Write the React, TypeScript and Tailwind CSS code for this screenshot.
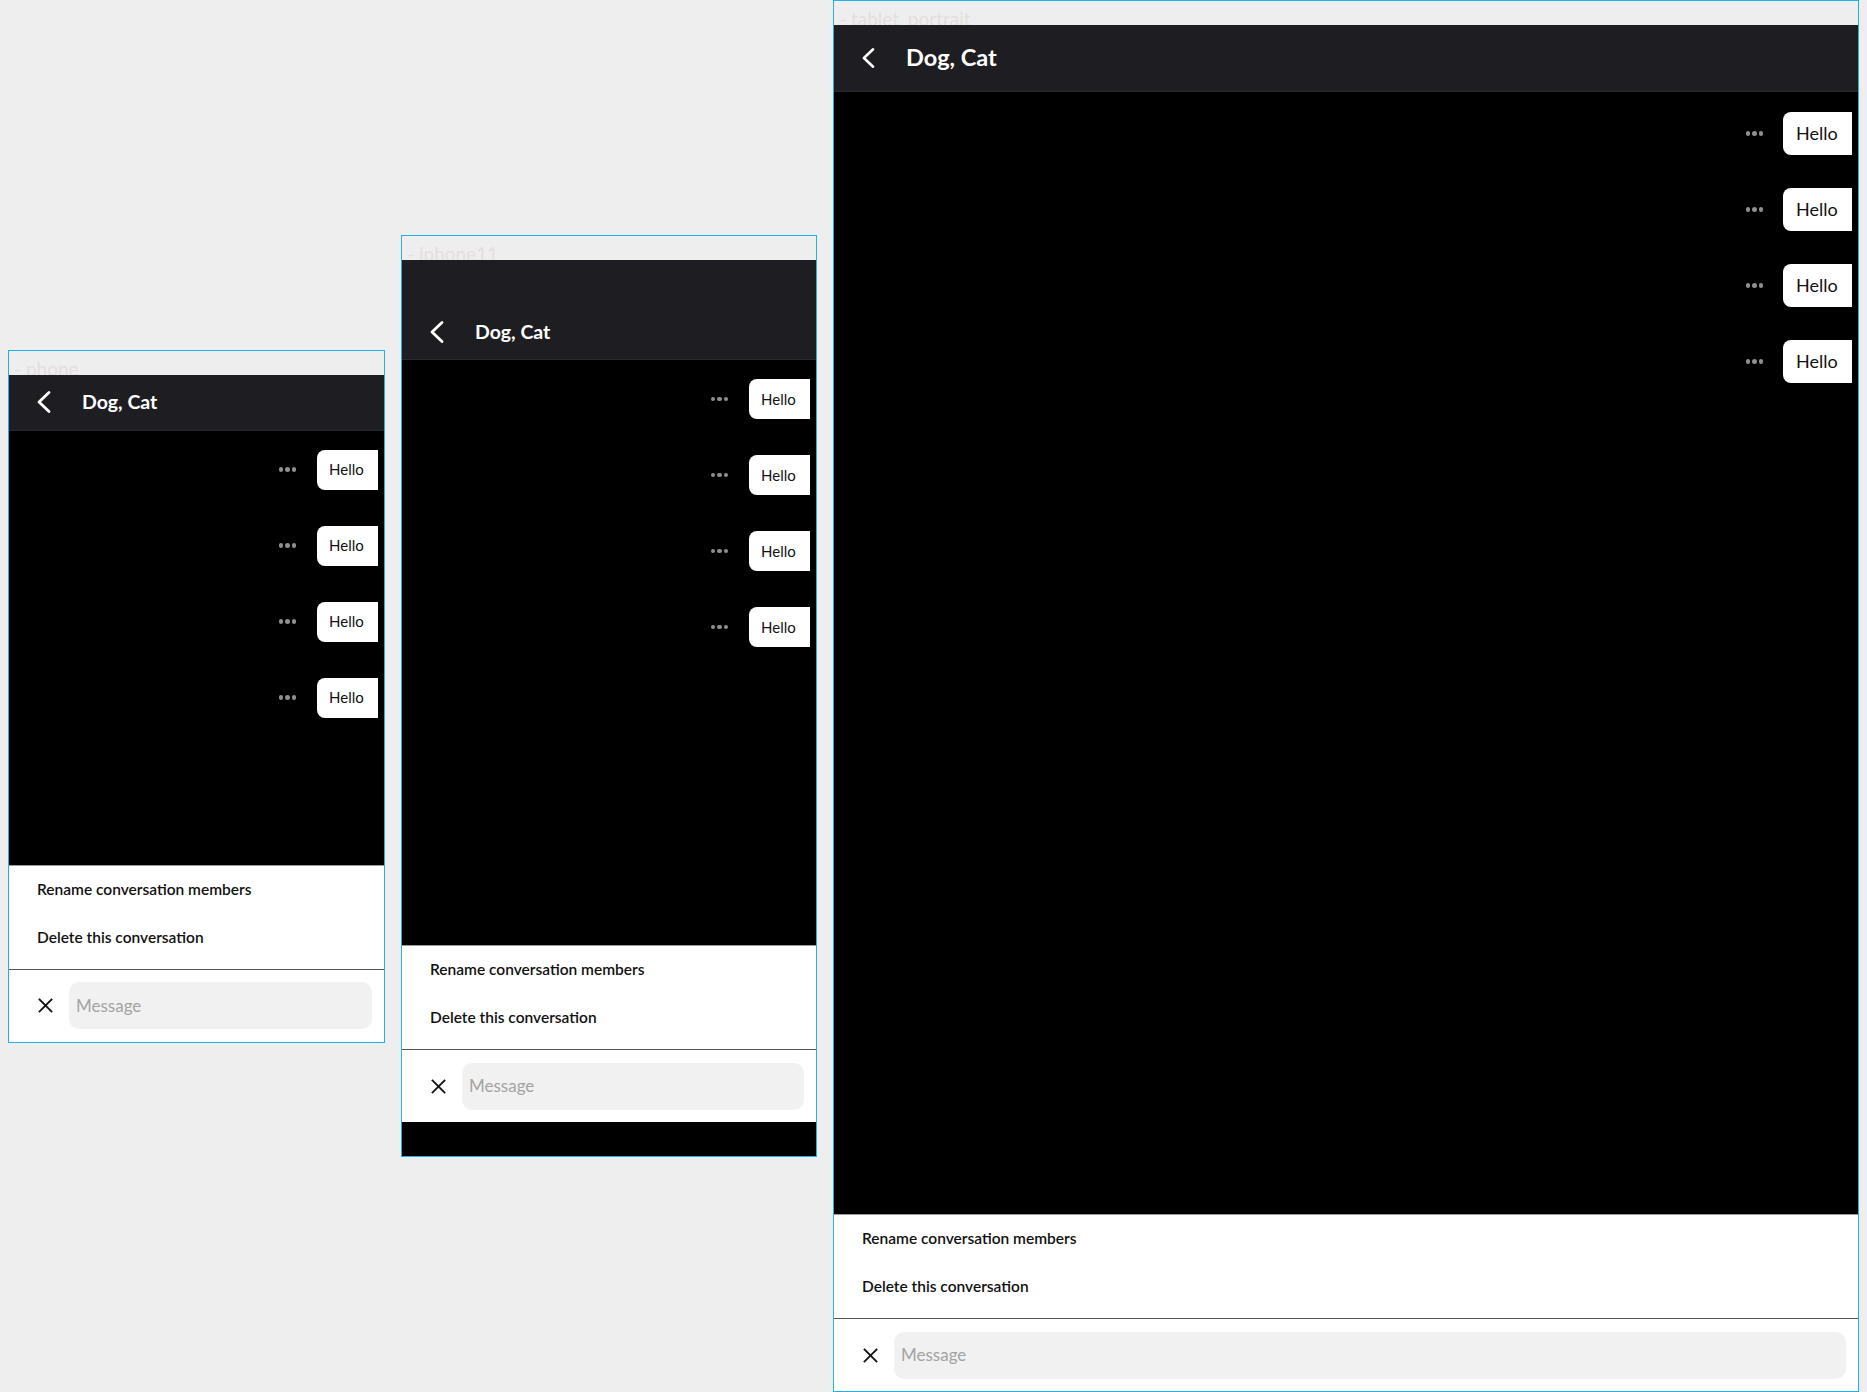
import React from 'react';

type Kind = 'phone' | 'iphone11' | 'tablet_portrait';

const Chevron: React.FC<{ big?: boolean }> = ({ big }) => (
  <svg
    width={big ? 15 : 16}
    height={big ? 22 : 24}
    viewBox="0 0 16 24"
    fill="none"
    stroke="white"
    strokeWidth={2.8}
    strokeLinecap="round"
    strokeLinejoin="round"
  >
    <polyline points="13,2.5 3,12 13,21.5" />
  </svg>
);

const CloseIcon: React.FC = () => (
  <svg width="15" height="15" viewBox="0 0 15 15" stroke="#111" strokeWidth={1.8} strokeLinecap="square">
    <line x1="1.5" y1="1.5" x2="13.5" y2="13.5" />
    <line x1="13.5" y1="1.5" x2="1.5" y2="13.5" />
  </svg>
);

const Dots: React.FC = () => (
  <div className="flex items-center gap-[2px]">
    <span className="block w-[4.5px] h-[4.5px] rounded-full bg-[#8f8f8f]" />
    <span className="block w-[4.5px] h-[4.5px] rounded-full bg-[#8f8f8f]" />
    <span className="block w-[4.5px] h-[4.5px] rounded-full bg-[#8f8f8f]" />
  </div>
);

const Message: React.FC<{ big?: boolean }> = ({ big }) => (
  <div className={big ? 'flex items-center justify-end gap-[20px] pr-[6px]' : 'flex items-center justify-end gap-[21px] pr-[6px]'}>
    <Dots />
    {big ? (
      <div className="h-[43px] w-[69px] pl-[13px] flex items-center bg-white rounded-l-[8px] text-[18px] text-[#111]">
        Hello
      </div>
    ) : (
      <div className="h-[40px] w-[61px] pl-[12px] flex items-center bg-white rounded-l-[8px] text-[15px] text-[#111]">
        Hello
      </div>
    )}
  </div>
);

const Device: React.FC<{ kind: Kind }> = ({ kind }) => {
  const tablet = kind === 'tablet_portrait';
  const iphone = kind === 'iphone11';

  const screenSize = tablet ? 'w-[1024px] h-[1366px]' : iphone ? 'w-[414px] h-[896px]' : 'w-[375px] h-[667px]';
  const headerSize = tablet ? 'h-[67px]' : iphone ? 'h-[100px] pt-[44px]' : 'h-[56px]';

  return (
    <div className="border border-[#1fb1ec] bg-[#eeeeee] flex flex-col shrink-0">
      <div className="h-[24px] overflow-hidden pl-[5px] pt-[6px] text-[19px] leading-[24px] text-[#e4dede]">
        - {kind}
      </div>
      <div className={`${screenSize} flex flex-col bg-black`}>
        {/* header */}
        <div className={`${headerSize} shrink-0 bg-[#1e1e22] border-b border-[#2a2a2e] flex items-center pl-[27px]`}>
          <Chevron big={tablet} />
          <span className={tablet ? 'ml-[30px] text-[23.5px] font-bold text-white' : 'ml-[30px] text-[19.5px] font-bold text-white'}>
            Dog, Cat
          </span>
        </div>

        {/* messages */}
        <div className={tablet ? 'flex-1 flex flex-col gap-[33px] pt-[20px]' : 'flex-1 flex flex-col gap-[36px] pt-[19px]'}>
          <Message big={tablet} />
          <Message big={tablet} />
          <Message big={tablet} />
          <Message big={tablet} />
        </div>

        {/* menu */}
        <div className="h-[104px] shrink-0 bg-white border-t border-[#9a9a9a] flex flex-col">
          <div className="h-[48px] flex items-center pl-[28px] text-[15.5px] font-semibold text-[#111]">
            Rename conversation members
          </div>
          <div className="h-[48px] flex items-center pl-[28px] text-[15.5px] font-semibold text-[#111]">
            Delete this conversation
          </div>
        </div>

        {/* input */}
        <div className="h-[73px] shrink-0 bg-white border-t border-[#555] flex items-center pl-[29px] pr-[12px]">
          <CloseIcon />
          <div className="ml-[16px] flex-1 h-[47px] rounded-[10px] bg-[#f1f1f1] flex items-center pl-[7px] text-[17px] text-[#a3a3a3]">
            Message
          </div>
        </div>

        {iphone && <div className="h-[34px] shrink-0 bg-black" />}
      </div>
    </div>
  );
};

const App: React.FC = () => {
  return (
    <div className="w-[1867px] h-[1392px] bg-[#eeeeee] flex items-center gap-[16px] pl-[8px] font-['Lato',sans-serif] overflow-hidden">
      <Device kind="phone" />
      <Device kind="iphone11" />
      <Device kind="tablet_portrait" />
    </div>
  );
};

export default App;
